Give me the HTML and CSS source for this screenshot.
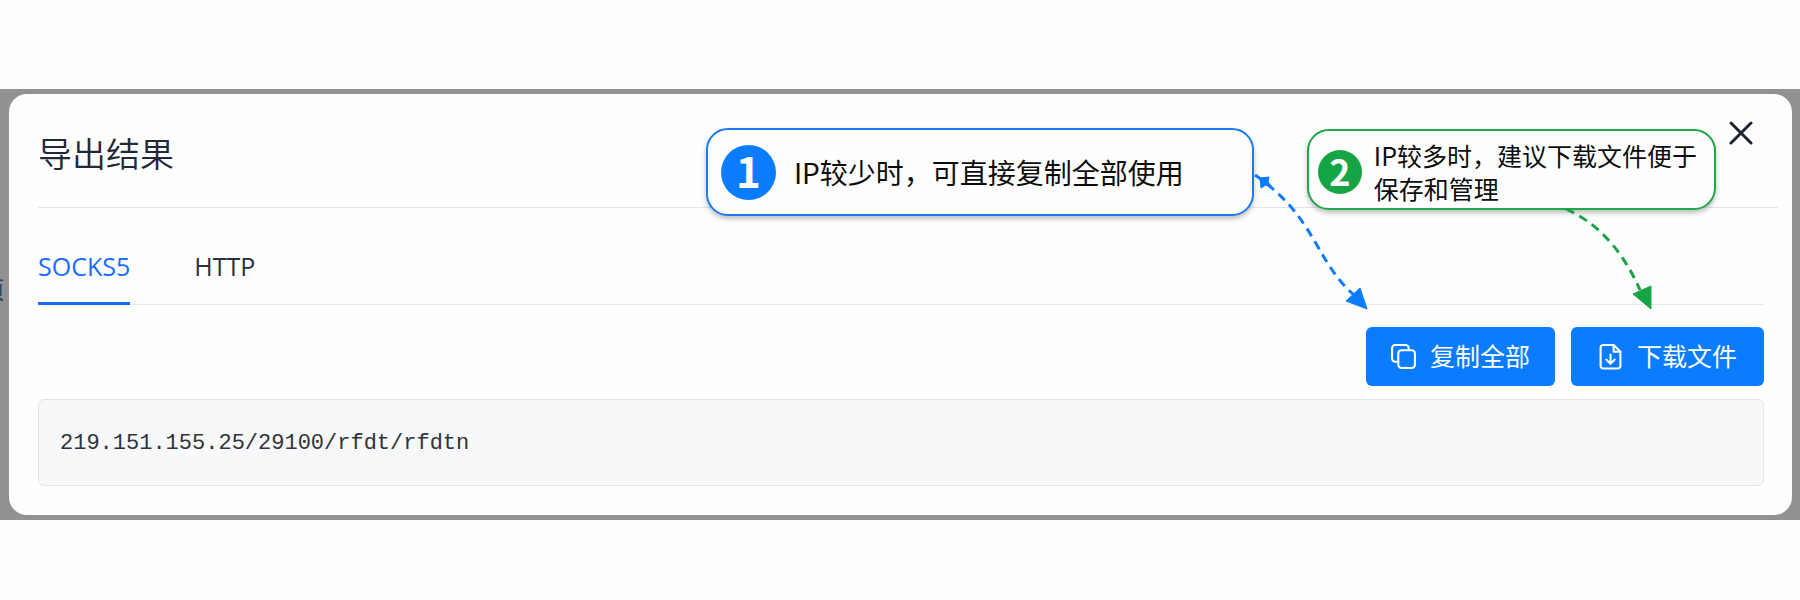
FILE: index.html
```html
<!DOCTYPE html>
<html lang="zh-CN">
<head>
    <meta charset="UTF-8" />
    <title>导出结果</title>
    <link rel="stylesheet" href="styles.css">
</head>
<body>
    <div class="overlay">
        <span class="behind" aria-hidden="true">项</span>
        <div class="modal" role="dialog" aria-labelledby="modal-title">
            <header class="modal-header">
                <h1 id="modal-title">导出结果</h1>
            </header>

            <nav class="tabs">
                <button type="button" class="tab active">SOCKS5</button>
                <button type="button" class="tab">HTTP</button>
            </nav>

            <div class="actions">
                <button type="button" class="btn">
                    <svg class="icon" viewBox="0 0 24 24">
                        <path d="M5.500 17H4A3 3 0 0 1 1 14V4A3 3 0 0 1 4 1H14A3 3 0 0 1 17 4V5" />
                        <rect x="7" y="6" width="16" height="17" rx="3" />
                    </svg>
                    复制全部
                </button>
                <button type="button" class="btn btn-download">
                    <svg class="icon" viewBox="0 0 24 24">
                        <path d="M15 1H5A2.500 2.500 0 0 0 2.500 3V21A2.500 2.500 0 0 0 5 23.500H19A2.500 2.500 0 0 0 21.500 21V7.500Z" />
                        <path d="M15 1V7.500H21.500" />
                        <path d="M12 10V19M8 15L12 19L16 15" />
                    </svg>
                    下载文件
                </button>
            </div>

            <pre class="result">219.151.155.25/29100/rfdt/rfdtn</pre>

            <div class="guide">
                <div class="tip tip-copy">
                    <span class="num">1</span>
                    <p>IP较少时，可直接复制全部使用</p>
                </div>
                <div class="tip tip-download">
                    <span class="num">2</span>
                    <p>IP较多时，建议下载文件便于<br>保存和管理</p>
                </div>
                <button type="button" class="close" aria-label="关闭">
                    <svg viewBox="0 0 24 24"><path d="M2 2L22 22M22 2L2 22" /></svg>
                </button>
            </div>

            <svg class="arrows" viewBox="0 0 420 150">
                <g class="arrow-copy">
                    <path class="line" d="M6 15C67 57 66 101 105 135" />
                    <path class="head" d="M118 149L97 141L111 128Z" />
                    <path class="head" d="M11 18L20 17L19 22L23 27L17 25L12 28Z" />
                </g>
                <g class="arrow-download">
                    <path class="line" d="M317 49C353 65 376 96 391 130" />
                    <path class="head" d="M402 149L384 134L402 126Z" />
                </g>
            </svg>
        </div>
    </div>
</body>
</html>
```

FILE: styles.css
```css
* {
    box-sizing: border-box;
}

body {
    margin: 0;
    min-height: 100vh;
    padding: 89px 0 81px;
    background-color: #fefefe;
    font-family: "Open Sans", "Noto Sans CJK SC", sans-serif;
    color: #1f2937;
}

button {
    font-family: inherit;
    border: none;
    cursor: pointer;
}

.overlay {
    position: relative;
    overflow: hidden;
    padding: 5px 8px 5px 9px;
    background-color: #929292;
}

/* page text that shows at the left of the modal */
.behind {
    position: absolute;
    top: 182px;
    left: -20px;
    font-size: 24px;
    color: #344060;
}

.modal {
    position: relative;
    padding: 0 28px 29px 29px;
    background-color: #fefefe;
    border-radius: 18px;
}

.modal-header {
    margin-right: -14px;
    padding: 35px 0 28px;
    border-bottom: 1px solid #e3e5ea;
}

h1 {
    margin: 0;
    font-size: 34px;
    font-weight: 350;
    line-height: 50px;
}

.tabs {
    display: flex;
    gap: 64px;
    border-bottom: 1px solid #e5e7eb;
}

.tab {
    margin-bottom: -1px;
    padding: 40px 0 18px;
    border-bottom: 3px solid transparent;
    background: none;
    font-size: 25px;
    line-height: 36px;
    color: #2b3140;
}

.tab.active {
    color: #1a6dff;
    border-bottom-color: #1a6dea;
}

.actions {
    display: flex;
    justify-content: flex-end;
    gap: 16px;
    margin: 22px 0 13px;
}

.btn {
    display: flex;
    align-items: center;
    gap: 14px;
    padding: 11px 25px;
    border-radius: 6px;
    background-color: #0a7cff;
    font-size: 25px;
    line-height: 37px;
    color: #fff;
}

.btn-download {
    padding: 11px 27px;
}

.icon {
    width: 25px;
    height: 25px;
    fill: none;
    stroke: #fff;
    stroke-width: 2;
    stroke-linejoin: round;
    stroke-linecap: round;
    overflow: visible;
}

.result {
    margin: 0;
    padding: 27px 21px 24px;
    border: 1px solid #e1e4e8;
    border-radius: 6px;
    background-color: #f7f8fa;
    font-family: "Liberation Mono", monospace;
    font-size: 22px;
    line-height: 34px;
    color: #303338;
}

.guide {
    position: absolute;
    top: 34px;
    right: 38px;
    display: flex;
    align-items: flex-start;
    font-family: "Noto Sans CJK SC", sans-serif;
    color: #0c0c0c;
}

.tip {
    display: flex;
    align-items: center;
    border: 2px solid;
    border-radius: 22px;
    background-color: #fefefe;
    box-shadow: 0 3px 5px rgba(0, 0, 0, 0.25);
}

.tip p {
    margin: 0;
    color: #0c0c0c;
}

.num {
    display: flex;
    align-items: center;
    justify-content: center;
    padding-bottom: 4px;
    border-radius: 50%;
    font-weight: bold;
    line-height: 1;
    color: #fff;
}

.tip-copy {
    gap: 18px;
    min-height: 88px;
    margin-right: 53px;
    padding: 0 68px 0 13px;
    border-color: #1a7bf0;
    font-size: 28px;
}

.tip-copy .num {
    width: 55px;
    height: 55px;
    background-color: #0a7cff;
    font-size: 42px;
}

.tip-download {
    gap: 12px;
    min-height: 81px;
    margin: 1px 12px 0 0;
    padding: 5px 17px 0 9px;
    border-color: #1ea84a;
    font-size: 25px;
    line-height: 33px;
}

.tip-download .num {
    width: 44px;
    height: 44px;
    background-color: #16a545;
    font-size: 36px;
}

.close {
    width: 26px;
    height: 26px;
    margin-top: -8px;
    padding: 0;
    background: none;
}

.close svg {
    display: block;
    width: 24px;
    height: 24px;
    margin: 0 auto;
    fill: none;
    stroke: #1d2430;
    stroke-width: 3;
    stroke-linecap: round;
}

.arrows {
    position: absolute;
    top: 66px;
    right: 123px;
    width: 420px;
    height: 150px;
    pointer-events: none;
}

.arrows .line {
    fill: none;
    stroke-width: 3;
    stroke-dasharray: 9 6;
}

.arrow-copy {
    fill: #0a7cff;
    stroke: #0a7cff;
}

.arrow-download {
    fill: #16a545;
    stroke: #16a545;
}
```
